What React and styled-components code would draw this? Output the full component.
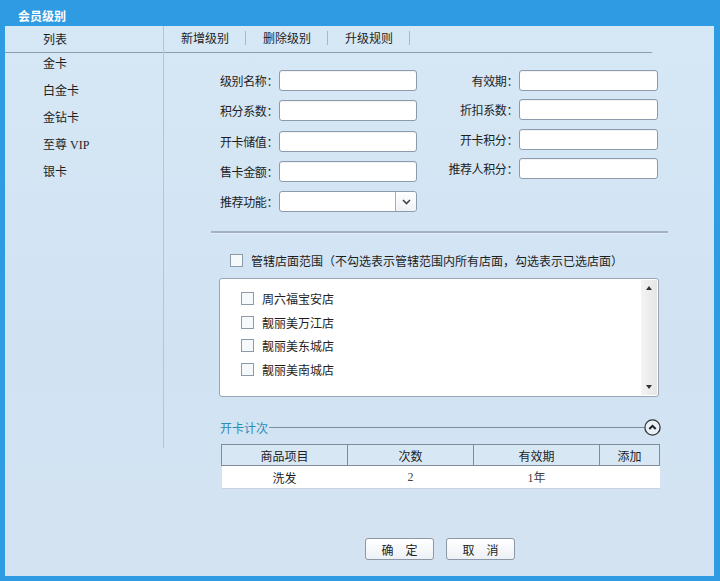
import styled, { createGlobalStyle } from 'styled-components';

const GlobalStyle = createGlobalStyle`
  html, body {
    margin: 0;
    padding: 0;
  }
  body {
    font-family: "Noto Sans CJK SC", "Noto Sans", sans-serif;
    font-size: 12px;
    color: #1e1e1e;
  }
  * {
    box-sizing: border-box;
  }
`;

const levels = ['金卡', '白金卡', '金钻卡', '至尊 VIP', '银卡'];
const tabs = ['新增级别', '删除级别', '升级规则'];
const leftFields = ['级别名称：', '积分系数：', '开卡储值：', '售卡金额：'];
const rightFields = ['有效期：', '折扣系数：', '开卡积分：', '推荐人积分：'];
const stores = ['周六福宝安店', '靓丽美万江店', '靓丽美东城店', '靓丽美南城店'];
const columns = [
  { title: '商品项目', width: 126 },
  { title: '次数', width: 126 },
  { title: '有效期', width: 126 },
  { title: '添加', width: 60 }
];
const rows = [['洗发', '2', '1年', '']];

export default function App() {
  return (
    <>
      <GlobalStyle />
      <Window>
        <TitleBar>会员级别</TitleBar>
        <Panel>
          <Sidebar>
            <SideHeader>列表</SideHeader>
            <SideList>
              {levels.map(level => (
                <SideItem key={level}>{level}</SideItem>
              ))}
            </SideList>
          </Sidebar>

          <Main>
            <TabBar>
              {tabs.map(tab => (
                <Tab key={tab}>{tab}</Tab>
              ))}
            </TabBar>

            <Form>
              <FormColumn gap={9.3}>
                {leftFields.map(label => (
                  <FieldRow key={label}>
                    <Label width={115}>{label}</Label>
                    <Input width={138} />
                  </FieldRow>
                ))}
                <FieldRow>
                  <Label width={115}>推荐功能：</Label>
                  <Select>
                    <SelectValue />
                    <SelectButton>
                      <svg width="9" height="6" viewBox="0 0 9 6">
                        <path d="M1 1 L4.5 4.5 L8 1" fill="none" stroke="#444" strokeWidth="1.6" />
                      </svg>
                    </SelectButton>
                  </Select>
                </FieldRow>
              </FormColumn>
              <FormColumn gap={8.4}>
                {rightFields.map(label => (
                  <FieldRow key={label}>
                    <Label width={102}>{label}</Label>
                    <Input width={139} />
                  </FieldRow>
                ))}
              </FormColumn>
            </Form>

            <Divider />

            <ScopeRow>
              <Checkbox />
              <span>管辖店面范围（不勾选表示管辖范围内所有店面，勾选表示已选店面）</span>
            </ScopeRow>

            <ListBox>
              <ListItems>
                {stores.map(store => (
                  <StoreItem key={store}>
                    <Checkbox />
                    <span>{store}</span>
                  </StoreItem>
                ))}
              </ListItems>
              <ScrollBar>
                <Arrow up />
                <Arrow />
              </ScrollBar>
            </ListBox>

            <SectionHeader>
              <SectionTitle>开卡计次</SectionTitle>
              <SectionLine />
              <svg width="17" height="17" viewBox="0 0 17 17">
                <circle cx="8.5" cy="8.5" r="7.6" fill="#e8f0f8" stroke="#333" strokeWidth="1.3" />
                <path d="M5.3 10 L8.5 6.8 L11.7 10" fill="none" stroke="#222" strokeWidth="2" />
              </svg>
            </SectionHeader>

            <Table>
              <thead>
                <tr>
                  {columns.map(col => (
                    <HeadCell key={col.title} style={{ width: col.width }}>{col.title}</HeadCell>
                  ))}
                </tr>
              </thead>
              <tbody>
                {rows.map((row, i) => (
                  <tr key={i}>
                    {row.map((cell, j) => (
                      <BodyCell key={j} serif={j > 0}>{cell}</BodyCell>
                    ))}
                  </tr>
                ))}
              </tbody>
            </Table>

            <Actions>
              <Button>确　定</Button>
              <Button>取　消</Button>
            </Actions>
          </Main>
        </Panel>
      </Window>
    </>
  );
}

const Window = styled.div`
  width: 720px;
  height: 581px;
  background: #2f9be2;
  display: flex;
  flex-direction: column;
  padding: 0 6px 5px 5px;
`;

const TitleBar = styled.div`
  height: 26px;
  line-height: 31px;
  padding-left: 13px;
  color: #ffffff;
  font-weight: bold;
  font-size: 12px;
`;

const Panel = styled.div`
  flex: 1;
  display: flex;
  align-items: flex-start;
  background: linear-gradient(to bottom, #d6e7f5 0%, #d1e3f3 60%, #d4e3f2 100%);
`;

const Sidebar = styled.div`
  width: 159px;
  height: 422px;
  border-right: 1px solid #b4c5d6;
  flex-shrink: 0;
`;

const SideHeader = styled.div`
  height: 27px;
  line-height: 25px;
  padding-left: 38px;
  border-bottom: 1px solid #8b9cae;
`;

const SideList = styled.div`
  display: flex;
  flex-direction: column;
`;

const SideItem = styled.div`
  height: 27px;
  line-height: 22px;
  padding-left: 38px;
  font-family: "Liberation Serif", "Noto Sans CJK SC", serif;
`;

const Main = styled.div`
  flex: 1;
  display: flex;
  flex-direction: column;
`;

const TabBar = styled.div`
  width: 488px;
  height: 27px;
  display: flex;
  align-items: center;
  border-bottom: 1px solid #8b9cae;
  padding-bottom: 2px;
`;

const Tab = styled.div`
  padding: 0 16px 0 17px;
  line-height: 14px;
  border-right: 1px solid #a8b8c9;
`;

const Form = styled.div`
  display: flex;
  padding-top: 17px;
`;

const FormColumn = styled.div`
  display: flex;
  flex-direction: column;
  gap: ${props => props.gap}px;
`;

const FieldRow = styled.div`
  display: flex;
  align-items: center;
  height: 21px;
`;

const Label = styled.div`
  width: ${props => props.width}px;
  text-align: right;
  padding-right: 1px;
  letter-spacing: -0.4px;
`;

const Input = styled.div`
  width: ${props => props.width}px;
  height: 21px;
  background: #ffffff;
  border: 1px solid #8c9bab;
  border-radius: 3px;
  box-shadow: inset 0 1px 1px rgba(0, 0, 0, 0.06);
`;

const Select = styled.div`
  width: 138px;
  height: 21px;
  display: flex;
  background: #ffffff;
  border: 1px solid #8c9bab;
  border-radius: 3px;
`;

const SelectValue = styled.div`
  flex: 1;
`;

const SelectButton = styled.div`
  width: 21px;
  display: flex;
  align-items: center;
  justify-content: center;
  border-left: 1px solid #a2afbc;
  background: linear-gradient(to bottom, #ffffff, #eef2f6);
  border-radius: 0 3px 3px 0;
`;

const Divider = styled.div`
  width: 457px;
  height: 2px;
  margin: 19px 0 0 47px;
  background: #a2b2c4;
  border-bottom: 1px solid #e2edf7;
  box-sizing: content-box;
`;

const ScopeRow = styled.div`
  display: flex;
  align-items: center;
  height: 14px;
  margin: 19px 0 0 66px;
  gap: 8px;
`;

const Checkbox = styled.span`
  width: 13px;
  height: 13px;
  border: 1px solid #8d9aa8;
  background: #f6f9fc;
  flex-shrink: 0;
`;

const ListBox = styled.div`
  width: 440px;
  height: 119px;
  margin: 11px 0 0 55px;
  display: flex;
  background: #ffffff;
  border: 1px solid #9aa6b3;
  border-radius: 3px;
  overflow: hidden;
`;

const ListItems = styled.div`
  flex: 1;
  padding: 8px 0 0 21px;
`;

const StoreItem = styled.div`
  display: flex;
  align-items: center;
  height: 23.5px;
  gap: 8px;
`;

const ScrollBar = styled.div`
  width: 16px;
  margin: 1px 1px 1px 0;
  display: flex;
  flex-direction: column;
  justify-content: space-between;
  align-items: center;
  padding: 6px 0;
  background: linear-gradient(to right, #f4f4f4, #e6e6e6);
`;

const Arrow = styled.span`
  width: 0;
  height: 0;
  border-left: 3px solid transparent;
  border-right: 3px solid transparent;
  ${props => props.up
    ? 'border-bottom: 4px solid #333;'
    : 'border-top: 4px solid #333;'}
`;

const SectionHeader = styled.div`
  width: 441px;
  height: 17px;
  margin: 22px 0 0 56px;
  display: flex;
  align-items: center;
`;

const SectionTitle = styled.span`
  color: #2a8db4;
`;

const SectionLine = styled.div`
  flex: 1;
  height: 1px;
  background: #7e8e9e;
  margin-left: 1px;
`;

const Table = styled.table`
  width: 438px;
  margin: 8px 0 0 57px;
  border-collapse: collapse;
  table-layout: fixed;
`;

const HeadCell = styled.th`
  height: 21px;
  padding: 0;
  font-weight: normal;
  text-align: center;
  background: #d8e7f4;
  border: 1px solid #7f8c9a;
`;

const BodyCell = styled.td`
  height: 23px;
  padding: 0;
  text-align: center;
  background: #ffffff;
  border-bottom: 1px solid #c9d3dd;
  font-family: ${props => props.serif
    ? '"Liberation Serif", "Noto Sans CJK SC", serif'
    : '"Noto Sans CJK SC", sans-serif'};
  color: ${props => props.serif ? '#444' : '#1e1e1e'};
`;

const Actions = styled.div`
  display: flex;
  justify-content: center;
  gap: 12px;
  margin-top: 49px;
  padding-left: 2px;
`;

const Button = styled.button`
  width: 69px;
  height: 22px;
  padding: 0;
  font-family: "Noto Sans CJK SC", sans-serif;
  font-size: 12px;
  color: #1e1e1e;
  background: linear-gradient(to bottom, #ffffff, #edf1f5);
  border: 1px solid #8c98a5;
  border-radius: 3px;
`;
